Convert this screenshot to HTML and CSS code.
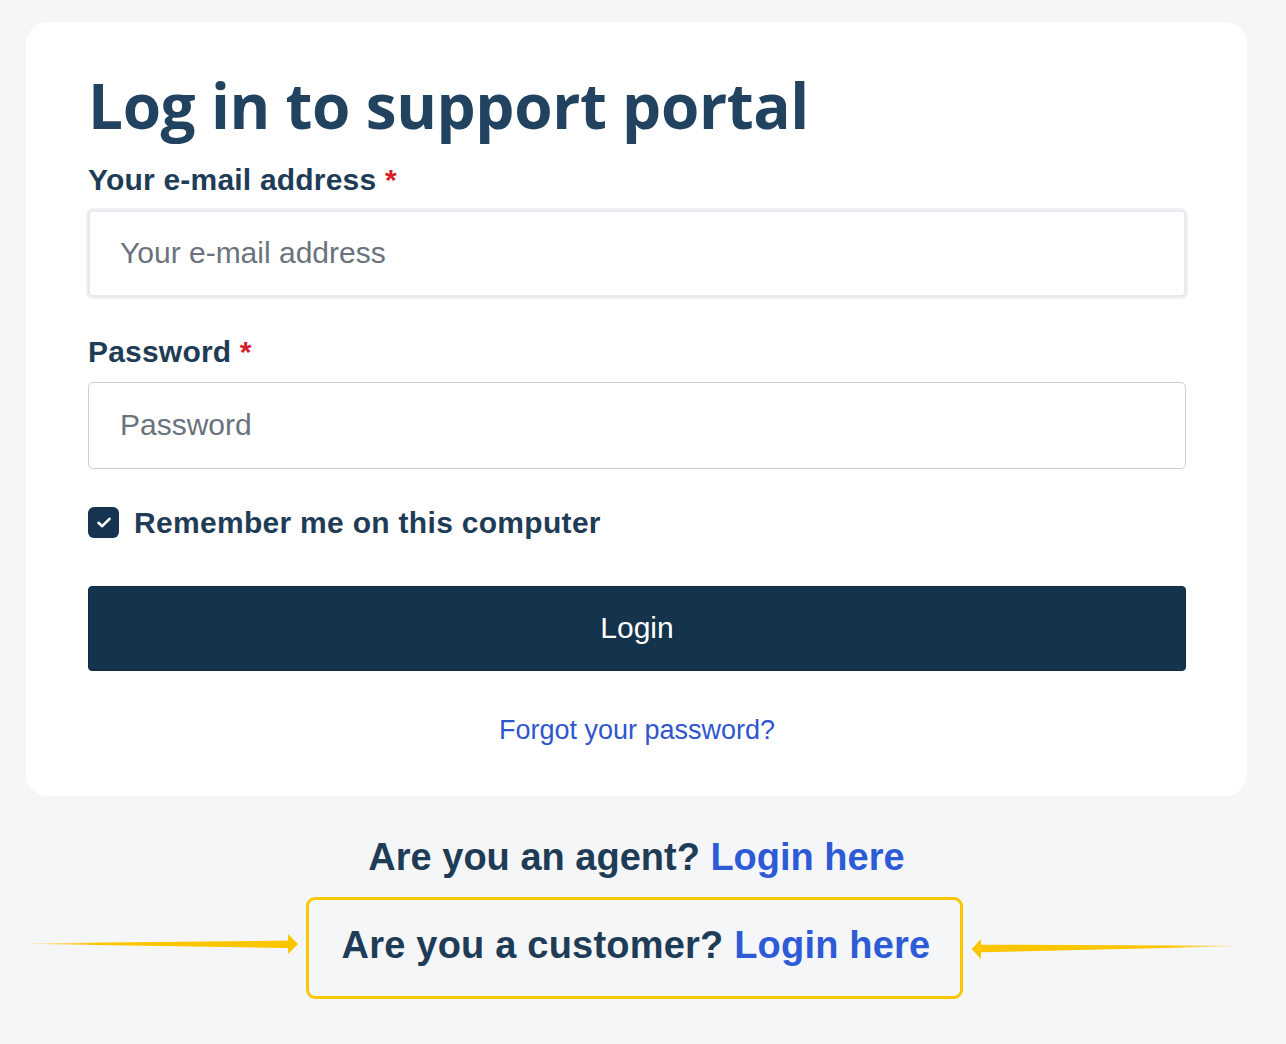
FILE: index.html
```html
<!DOCTYPE html>
<html lang="en">
<head>
<meta charset="utf-8">
<title>Log in to support portal</title>
<link rel="stylesheet" href="styles.css">
</head>
<body>
<main class="page">
  <section class="card">
    <h1 class="title">Log in to support portal</h1>
    <form class="form">
      <label class="label" for="email">Your e-mail address <span class="req">*</span></label>
      <input class="input input-focus" id="email" type="email" placeholder="Your e-mail address">
      <label class="label label-gap" for="pw">Password <span class="req">*</span></label>
      <input class="input" id="pw" type="password" placeholder="Password">
      <div class="remember">
        <span class="check">
          <svg width="16" height="13" viewBox="0 0 16 13"><path d="M2.5 6.8 L6.2 10.2 L13.5 2.8" fill="none" stroke="#fff" stroke-width="2.6" stroke-linecap="round" stroke-linejoin="round"/></svg>
        </span>
        <span class="remember-text">Remember me on this computer</span>
      </div>
      <button type="button" class="btn">Login</button>
      <div class="forgot"><a href="#" class="link">Forgot your password?</a></div>
    </form>
  </section>
  <p class="alt">Are you an agent? <a href="#" class="alt-link">Login here</a></p>
  <div class="customer-row">
    <div class="customer-box">
      <svg class="arrow arrow-left" width="270" height="24" viewBox="0 0 270 24">
        <defs>
          <linearGradient id="gl" x1="0" y1="0" x2="1" y2="0">
            <stop offset="0" stop-color="#fbc500" stop-opacity="0.2"/>
            <stop offset="0.25" stop-color="#fbc500" stop-opacity="1"/>
          </linearGradient>
        </defs>
        <polygon points="2,11.3 258,8.6 258,2 268,12 258,22 258,16 2,11.9" fill="url(#gl)"/>
      </svg>
      <span class="customer-text">Are you a customer? <a href="#" class="alt-link">Login here</a></span>
      <svg class="arrow arrow-right" width="270" height="26" viewBox="0 0 270 26">
        <defs>
          <linearGradient id="gr" x1="0" y1="0" x2="1" y2="0">
            <stop offset="0.75" stop-color="#fbc500" stop-opacity="1"/>
            <stop offset="1" stop-color="#fbc500" stop-opacity="0.2"/>
          </linearGradient>
        </defs>
        <polygon points="2.7,13 12,3 12,8.7 268,9.8 268,10.3 12,16.3 12,23" fill="url(#gr)"/>
      </svg>
    </div>
  </div>
</main>
</body>
</html>
```

FILE: styles.css
```css
* { box-sizing: border-box; }

html, body {
  margin: 0;
  background: #f5f6f8;
}

body {
  padding: 22px 39px 0 26px;
  font-family: "Liberation Sans", Arial, sans-serif;
  color: #1f3c57;
}

.page {
  display: flex;
  flex-direction: column;
  align-items: center;
}

.card {
  width: 100%;
  background: #ffffff;
  border-radius: 22px;
  padding: 45px 61px 50px 62px;
}

.title {
  margin: 0;
  font-family: "Open Sans", sans-serif;
  font-weight: 700;
  font-size: 62px;
  line-height: 76.8px;
  color: #22435f;
  letter-spacing: -0.4px;
}

.form {
  display: flex;
  flex-direction: column;
}

.label {
  margin-top: 18px;
  font-weight: 700;
  font-size: 30px;
  line-height: 36px;
  color: #1f3c57;
  letter-spacing: 0.2px;
}

.label-gap { margin-top: 37px; }

.req { color: #d4202a; }

.input {
  margin-top: 12px;
  height: 87px;
  width: 100%;
  border: 1px solid #c9d0d8;
  border-radius: 5px;
  padding: 0 31px;
  font-family: "Liberation Sans", Arial, sans-serif;
  font-size: 30px;
  color: #1f3c57;
  background: #fff;
  outline: none;
}

.input::placeholder { color: #6a737d; }

.input-focus {
  border: 2px solid #e6e9ee;
  box-shadow: 0 0 0 2px #eef0f4;
  padding-left: 30px;
}

.remember {
  margin-top: 36px;
  display: flex;
  align-items: center;
  gap: 15px;
  height: 36px;
}

.check {
  width: 31px;
  height: 31px;
  border-radius: 6px;
  background: #163450;
  display: flex;
  align-items: center;
  justify-content: center;
}

.remember-text {
  font-weight: 700;
  font-size: 30px;
  line-height: 36px;
  color: #1f3c57;
  letter-spacing: 0.3px;
}

.btn {
  margin-top: 45px;
  height: 85px;
  width: 100%;
  border: 1px solid #0f2a40;
  border-radius: 4px;
  background: #14334d;
  color: #ffffff;
  font-family: "Liberation Sans", Arial, sans-serif;
  font-size: 30px;
}

.forgot {
  margin-top: 43px;
  text-align: center;
  font-size: 27px;
  line-height: 32px;
}

.link {
  color: #2f56cf;
  text-decoration: none;
}

.alt {
  margin: 39px 0 0;
  font-weight: 700;
  font-size: 38px;
  line-height: 44px;
  color: #1f3c57;
  text-align: center;
}

.alt-link {
  color: #2d5bd6;
  text-decoration: none;
}

.customer-row {
  margin-top: 18px;
  display: flex;
  justify-content: center;
  padding-right: 4px;
}

.customer-box {
  position: relative;
  border: 3px solid #fbc500;
  border-radius: 9px;
  padding: 23px 30px 29px 33px;
}

.customer-text {
  display: block;
  font-weight: 700;
  font-size: 38px;
  line-height: 44px;
  color: #1f3c57;
  white-space: nowrap;
  letter-spacing: 0.2px;
}

.arrow {
  position: absolute;
  display: block;
}

.arrow-left {
  right: calc(100% + 9px);
  top: 32px;
}

.arrow-right {
  left: calc(100% + 9px);
  top: 36px;
}
```
